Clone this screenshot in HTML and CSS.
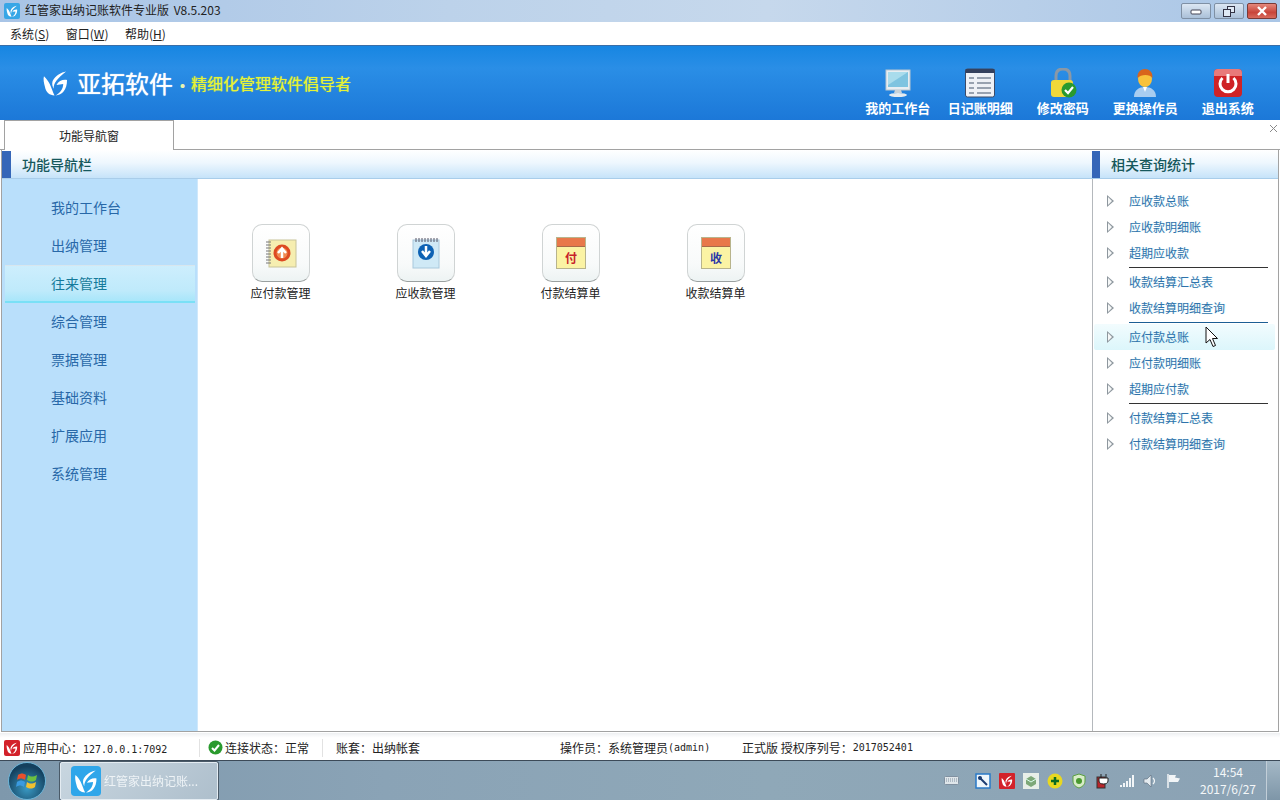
FILE: index.html
```html
<!DOCTYPE html>
<html lang="zh-CN">
<head>
<meta charset="utf-8">
<title>红管家出纳记账软件专业版</title>
<link rel="stylesheet" href="styles.css">
</head>
<body>
<svg class="defs" width="0" height="0" aria-hidden="true">
  <symbol id="logo" viewBox="0 0 26 30">
    <path d="M1 8C3 10 5 12 7 16C9 20 10 24 12 28C7 28 3 25 2 19C1 15 0 11 1 8Z"/>
    <path d="M24 3C19 4 13 7 10 13C9 16 10 19 11 21C11 15 15 10 24 3Z"/>
    <path d="M25 12C21 11 16 13 14 17L21 16C21 21 18 25 13 28C20 28 25 22 25 12Z"/>
  </symbol>
</svg>
<div class="app">
  <header class="titlebar">
    <svg class="title-icon" viewBox="0 0 16 16"><rect width="16" height="16" rx="2" fill="#37a6e6"/><svg x="2" y="1.500" width="12" height="13" class="logo-white"><use href="#logo"/></svg></svg>
    <span class="title-text">红管家出纳记账软件专业版 V8.5.203</span>
    <div class="win-btns">
      <span class="win-btn"><svg width="12" height="8" viewBox="0 0 12 8"><rect x="1" y="3" width="10" height="4" rx="1" fill="#fff" stroke="#445"/></svg></span>
      <span class="win-btn"><svg width="12" height="11" viewBox="0 0 12 11"><rect x="4.500" y="0.500" width="7" height="6" fill="#dfe9f4" stroke="#334"/><rect x="0.500" y="3.500" width="7" height="7" fill="#dfe9f4" stroke="#334"/></svg></span>
      <span class="win-btn win-close"><svg width="12" height="10" viewBox="0 0 12 10"><path d="M2 1L10 9M10 1L2 9" stroke="#fff" stroke-width="2.400"/></svg></span>
    </div>
  </header>

  <nav class="menubar">
    <span class="menu-item">系统(<u>S</u>)</span>
    <span class="menu-item">窗口(<u>W</u>)</span>
    <span class="menu-item">帮助(<u>H</u>)</span>
  </nav>

  <section class="banner">
    <div class="brand">
      <svg class="brand-logo"><use href="#logo"/></svg>
      <span class="brand-name">亚拓软件</span>
      <span class="brand-dot">·</span>
      <span class="brand-slogan">精细化管理软件倡导者</span>
    </div>
    <div class="tools">
      <div class="tool">
        <svg class="tool-icon" viewBox="0 0 30 30"><rect x="3" y="2" width="24" height="20" fill="#e8eef2" stroke="#b8c6d0"/><rect x="5" y="4" width="20" height="15" fill="#7fc4e0"/><path d="M5 4H25L5 17Z" fill="#a9dcec"/><path d="M12 22H18L19 25H11Z" fill="#c8d2d8"/><ellipse cx="15" cy="27" rx="9" ry="2" fill="#e6ecf0"/></svg>
        <span class="tool-label">我的工作台</span>
      </div>
      <div class="tool">
        <svg class="tool-icon" viewBox="0 0 30 30"><rect x="0.500" y="1" width="29" height="28" rx="2" fill="#eef1f6" stroke="#3a4a68"/><rect x="0.500" y="1" width="29" height="4" fill="#34415e"/><path d="M4 10H9M12 10H26M4 15H9M12 15H26M4 20H9M12 20H26M4 25H9M12 25H26" stroke="#98a2b0" stroke-width="2"/></svg>
        <span class="tool-label">日记账明细</span>
      </div>
      <div class="tool">
        <svg class="tool-icon" viewBox="0 0 30 30"><path d="M8 14V8C8 3 11 1 15 1C19 1 22 3 22 8V14" fill="none" stroke="#8a98a6" stroke-width="3"/><rect x="3" y="12" width="22" height="17" rx="3" fill="#f0d83a"/><circle cx="21" cy="22" r="7.500" fill="#2a9a2e"/><path d="M17 22L20 25L25 19" fill="none" stroke="#fff" stroke-width="2.200"/></svg>
        <span class="tool-label">修改密码</span>
      </div>
      <div class="tool">
        <svg class="tool-icon" viewBox="0 0 30 30"><path d="M4 29C4 22 9 19 15 19C21 19 26 22 26 29Z" fill="#a9cdf0"/><path d="M13 19H17L15 24Z" fill="#fff"/><ellipse cx="15" cy="11" rx="7" ry="8" fill="#f8c23c"/><path d="M7.500 10C7 4 11 1 15 1C19 1 23 4 22.500 10C20 6 11 6 7.500 10Z" fill="#d8641c"/></svg>
        <span class="tool-label">更换操作员</span>
      </div>
      <div class="tool">
        <svg class="tool-icon" viewBox="0 0 30 30"><rect x="1" y="1" width="28" height="28" rx="4" fill="#cf2326"/><path d="M1 5A4 4 0 0 1 5 1H25A4 4 0 0 1 29 5V8H1Z" fill="#e87a7a"/><path d="M9.500 10A8 8 0 1 0 20.500 10" fill="none" stroke="#fff" stroke-width="3"/><path d="M15 6V15" stroke="#fff" stroke-width="3"/></svg>
        <span class="tool-label">退出系统</span>
      </div>
    </div>
  </section>

  <div class="tabs">
    <div class="tab">功能导航窗</div>
    <svg class="tab-close" width="9" height="9" viewBox="0 0 9 9"><path d="M1 1L8 8M8 1L1 8" stroke="#8a8a8a"/></svg>
  </div>

  <main class="workspace">
    <div class="nav-area">
      <div class="panel-head"><span class="panel-mark"></span><span class="panel-title">功能导航栏</span></div>
      <div class="nav-body">
        <aside class="sidebar">
          <div class="side-item">我的工作台</div>
          <div class="side-item">出纳管理</div>
          <div class="side-item side-active">往来管理</div>
          <div class="side-item">综合管理</div>
          <div class="side-item">票据管理</div>
          <div class="side-item">基础资料</div>
          <div class="side-item">扩展应用</div>
          <div class="side-item">系统管理</div>
        </aside>
        <section class="content">
          <div class="launch">
            <div class="tile"><svg width="32" height="32" viewBox="0 0 32 32"><rect x="4" y="3" width="27" height="27" fill="#f6eeb0" stroke="#c8c49a"/><path d="M1 5H6M1 8H6M1 11H6M1 14H6M1 17H6M1 20H6M1 23H6M1 26H6" stroke="#777"/><circle cx="17" cy="16" r="8.500" fill="#dd4a22"/><circle cx="17" cy="16" r="5.500" fill="#f08a50"/><path d="M17 21V13M13 16L17 11.500L21 16" fill="none" stroke="#fff" stroke-width="2.500"/></svg></div>
            <span class="tile-label">应付款管理</span>
          </div>
          <div class="launch">
            <div class="tile"><svg width="32" height="32" viewBox="0 0 32 32"><rect x="3" y="3" width="26" height="28" fill="#cfe9f6" stroke="#a8c8dc"/><path d="M6 1V5M9 1V5M12 1V5M15 1V5M18 1V5M21 1V5M24 1V5M27 1V5" stroke="#556"/><circle cx="16" cy="15" r="8" fill="#0d62b4"/><path d="M16 9V18M12 14L16 19L20 14" fill="none" stroke="#fff" stroke-width="2.500"/></svg></div>
            <span class="tile-label">应收款管理</span>
          </div>
          <div class="launch">
            <div class="tile"><div class="ledger"><span class="ledger-top"></span><span class="ledger-char ledger-red">付</span></div></div>
            <span class="tile-label">付款结算单</span>
          </div>
          <div class="launch">
            <div class="tile"><div class="ledger"><span class="ledger-top"></span><span class="ledger-char ledger-blue">收</span></div></div>
            <span class="tile-label">收款结算单</span>
          </div>
        </section>
      </div>
    </div>
    <aside class="related">
      <div class="panel-head"><span class="panel-mark"></span><span class="panel-title">相关查询统计</span></div>
      <ul class="links">
        <li class="link"><i class="arrow"></i>应收款总账</li>
        <li class="link"><i class="arrow"></i>应收款明细账</li>
        <li class="link"><i class="arrow"></i>超期应收款</li>
        <li class="rule"></li>
        <li class="link"><i class="arrow"></i>收款结算汇总表</li>
        <li class="link"><i class="arrow"></i>收款结算明细查询</li>
        <li class="rule rule-blue"></li>
        <li class="link link-hover"><i class="arrow"></i>应付款总账</li>
        <li class="link"><i class="arrow"></i>应付款明细账</li>
        <li class="link"><i class="arrow"></i>超期应付款</li>
        <li class="rule"></li>
        <li class="link"><i class="arrow"></i>付款结算汇总表</li>
        <li class="link"><i class="arrow"></i>付款结算明细查询</li>
      </ul>
    </aside>
  </main>

  <footer class="status">
    <div class="cell cell-a"><svg class="logo-red" width="16" height="16" viewBox="0 0 16 16"><rect width="16" height="16" rx="2" fill="#d3222a"/><svg x="2" y="1.500" width="12" height="13" class="logo-white"><use href="#logo"/></svg></svg><span>应用中心&#xFF1A;<span class="mono">127.0.0.1:7092</span></span></div>
    <div class="cell cell-b"><svg width="15" height="15" viewBox="0 0 15 15"><circle cx="7.500" cy="7.500" r="7" fill="#2a9a2e"/><path d="M4 8L6.500 10.500L11 5" fill="none" stroke="#fff" stroke-width="2"/></svg><span>连接状态&#xFF1A;正常</span></div>
    <div class="cell cell-c">账套&#xFF1A;出纳帐套</div>
    <div class="cell cell-d">操作员&#xFF1A;系统管理员<span class="mono">(admin)</span></div>
    <div class="cell cell-e">正式版 授权序列号&#xFF1A;<span class="mono">2017052401</span></div>
  </footer>

  <div class="taskbar">
    <div class="orb"><svg width="22" height="22" viewBox="0 0 22 22"><path d="M2 5C5 3 7 3 10 5L9 10C6 8 4 8 1 10Z" fill="#e8502c"/><path d="M12 5C15 7 17 7 21 5L20 10C17 12 15 12 11 10Z" fill="#6cc040"/><path d="M1 12C4 10 6 10 9 12L8 17C5 15 3 15 0 17Z" fill="#3a9ae0"/><path d="M11 12C14 14 16 14 20 12L19 17C16 19 14 19 10 17Z" fill="#f0c030"/></svg></div>
    <div class="task-btn">
      <svg class="task-icon" viewBox="0 0 32 32"><rect width="32" height="32" rx="4" fill="#2ea6ea"/><svg x="3" y="2" width="26" height="28" class="logo-white"><use href="#logo"/></svg></svg>
      <span class="task-text">红管家出纳记账...</span>
    </div>
    <div class="tray">
      <svg class="tray-kbd" width="15" height="9" viewBox="0 0 15 9"><rect x="0.500" y="0.500" width="14" height="8" rx="1" fill="#dfe6ea" stroke="#8090a0"/><path d="M2 3H13M2 5H13" stroke="#8090a0" stroke-dasharray="1 1"/></svg>
      <svg width="16" height="16" viewBox="0 0 16 16"><rect x="1" y="1" width="14" height="14" fill="#eef6fc" stroke="#2a7ac8" stroke-width="1.500"/><path d="M4 4L12 12" stroke="#1b3b70" stroke-width="2"/><circle cx="5" cy="5" r="2" fill="#1b3b70"/></svg>
      <svg width="16" height="16" viewBox="0 0 16 16"><rect width="16" height="16" rx="1" fill="#d3222a"/><svg x="2" y="1.500" width="12" height="13" class="logo-white"><use href="#logo"/></svg></svg>
      <svg width="16" height="16" viewBox="0 0 16 16"><rect width="16" height="16" fill="#e8efe8"/><path d="M3 6L8 3L13 6L13 11L8 14L3 11Z" fill="#7da878"/><path d="M3 6L8 9L13 6" fill="none" stroke="#dfe" /></svg>
      <svg width="16" height="16" viewBox="0 0 16 16"><circle cx="8" cy="8" r="7.500" fill="#e8d820"/><path d="M8 4V12M4 8H12" stroke="#0a6a20" stroke-width="2.500"/></svg>
      <svg width="16" height="16" viewBox="0 0 16 16"><path d="M8 1L14 3V8C14 12 11 14 8 15C5 14 2 12 2 8V3Z" fill="#d8ecc8" stroke="#5aa040"/><circle cx="8" cy="8" r="3" fill="#4a9a30"/></svg>
      <svg width="16" height="16" viewBox="0 0 16 16"><rect x="2" y="4" width="8" height="11" fill="#b8242a" stroke="#333"/><path d="M6 1V5M11 1V5M4 5H13V8C13 10 11 11 8.500 11C6 11 4 10 4 8Z" fill="#fff" stroke="#222"/></svg>
      <svg width="16" height="13" viewBox="0 0 16 13"><path d="M1 11H3V13H1ZM4 9H6V13H4ZM7 7H9V13H7ZM10 4H12V13H10ZM13 1H15V13H13Z" fill="#f2f5f7"/></svg>
      <svg width="15" height="14" viewBox="0 0 15 14"><path d="M1 5H4L8 1V13L4 9H1Z" fill="#e4ebf0" stroke="#5a6a78" stroke-width="0.600"/><path d="M10 4C12 6 12 8 10 10" fill="none" stroke="#f2f5f7" stroke-width="1.200"/></svg>
      <svg width="15" height="16" viewBox="0 0 15 16"><path d="M2 1V15" stroke="#f2f5f7" stroke-width="1.500"/><path d="M3 2H10L9 4.500L14 5.500L12 9H3Z" fill="#f2f5f7"/></svg>
    </div>
    <div class="clock"><span>14:54</span><span>2017/6/27</span></div>
    <div class="show-desktop"></div>
  </div>

  <svg class="cursor" width="14" height="22" viewBox="0 0 14 22"><path d="M1 1V17L5 13.500L8 20.500L10.500 19.500L7.500 12.500H12.500Z" fill="#fff" stroke="#111"/></svg>
</div>
</body>
</html>
```
FILE: styles.css
```css
* { box-sizing: border-box; }
html, body { margin: 0; padding: 0; }
body {
  width: 1280px;
  height: 800px;
  overflow: hidden;
  background: #fff;
  color: #111;
  font: 12px "Noto Sans CJK SC", "Liberation Sans", sans-serif;
}
.defs { position: absolute; }
.app { position: relative; display: flex; flex-direction: column; height: 800px; }
.logo-white { fill: #fff; }

.titlebar {
  display: flex;
  align-items: center;
  height: 22px;
  padding-left: 4px;
  background: linear-gradient(90deg, #a8c4e6 0%, #bcd2ea 35%, #c6d8ec 60%, #aac6e6 100%);
  color: #222;
}
.title-icon { width: 16px; height: 16px; }
.title-text { margin-left: 5px; padding-bottom: 2px; line-height: 20px; word-spacing: 2px; }
.win-btns { display: flex; gap: 3px; margin-left: auto; margin-right: 3px; }
.win-btn {
  display: flex;
  align-items: center;
  justify-content: center;
  width: 30px;
  height: 16px;
  border: 1px solid #7f90a4;
  border-radius: 2px;
  background: linear-gradient(#dce7f3, #aac0d8);
}
.win-close { background: linear-gradient(#e4887c, #c8453a 60%, #d86a5c); border-color: #7a3a36; }

.menubar { display: flex; align-items: center; height: 23px; background: #fff; padding-left: 10px; color: #222; }
.menu-item { margin-right: 16.500px; line-height: 22px; }

.banner {
  display: flex;
  align-items: flex-start;
  height: 75px;
  border-top: 1px solid #3a6ea8;
  background: linear-gradient(#1786e2, #2a8ee6 30%, #1c78d8);
}
.brand { display: flex; align-items: center; height: 76px; padding: 0 0 2px 43px; color: #fff; }
.brand-logo { width: 25px; height: 30px; fill: #fff; }
.brand-name { margin-left: 9px; font-size: 24px; line-height: 30px; text-shadow: 0 0 1px #fff; }
.brand-dot { margin-left: 1px; padding-top: 3px; width: 17px; font-size: 16px; font-weight: bold; color: #e8f4b0; text-align: center; }
.brand-slogan { font-size: 16px; color: #e6f238; line-height: 24px; text-shadow: 0 0 1px #d8f030; }
.tools { display: flex; margin-left: auto; padding: 22px 11px 0 0; }
.tool { display: flex; flex-direction: column; align-items: center; width: 82.500px; }
.tool-icon { width: 30px; height: 30px; }
.tool-label { font-size: 13px; font-weight: bold; line-height: 19px; color: #fff; white-space: nowrap; }

.tabs {
  display: flex;
  align-items: flex-start;
  height: 30px;
  padding-left: 4px;
  border-bottom: 1px solid #a2a2a2;
  background: #fff;
}
.tab {
  width: 170px;
  height: 30px;
  border: 1px solid #a2a2a2;
  border-bottom: 0;
  background: #fff;
  text-align: center;
  line-height: 29px;
  color: #222;
}
.tab-close { margin: 4px 2px 0 auto; }

.workspace {
  display: flex;
  height: 582px;
  margin: 0 1px;
  border: 1px solid #a2a2a2;
  border-top: 0;
  background: #fff;
}
.nav-area { display: flex; flex-direction: column; flex: 1; min-width: 0; }
.panel-head {
  display: flex;
  align-items: stretch;
  flex: none;
  height: 29px;
  padding-top: 1px;
  border-bottom: 1px solid #a9cdea;
  background: linear-gradient(#fff, #eef7fe 45%, #c6e3f9);
}
.panel-mark { width: 9px; background: #3566b8; }
.panel-title { margin-left: 11px; font-size: 14px; line-height: 26px; color: #16585c; font-weight: 500; }
.nav-body { display: flex; flex: 1; }
.sidebar { width: 196px; padding-top: 10px; background: #b9dffb; border-right: 1px solid #cfe8fb; }
.side-item { height: 38px; padding-left: 49px; font-size: 14px; line-height: 37px; color: #2868a8; }
.side-active {
  margin: 0 2px 0 3px;
  padding-left: 46px;
  line-height: 35px;
  border-top: 1px solid #d8e6ee;
  border-bottom: 2px solid #7ae0f6;
  background: linear-gradient(#cdeefd, #bfeafb 70%, #a8e6fa);
  color: #157a9a;
}
.content { display: flex; flex: 1; gap: 85px; align-items: flex-start; padding: 45px 0 0 53px; }
.launch { display: flex; flex-direction: column; align-items: center; width: 60px; }
.tile {
  display: flex;
  align-items: center;
  justify-content: center;
  width: 58px;
  height: 58px;
  border: 1px solid #d0d4d4;
  border-bottom-color: #9aa0a0;
  border-radius: 10px;
  background: linear-gradient(#fff, #f8fafa 70%, #edf3f3);
}
.tile-label { margin: 1px 1px 0 0; line-height: 20px; white-space: nowrap; color: #222; }
.ledger {
  display: flex;
  flex-direction: column;
  width: 30px;
  height: 32px;
  border: 1px solid #b8b48c;
  background: #fbf3a4;
}
.ledger-top { height: 9px; background: #e8784a; border-bottom: 1px solid #a86a4a; }
.ledger-char { flex: 1; text-align: center; font-size: 12px; font-weight: bold; line-height: 21px; }
.ledger-red { color: #c8222a; }
.ledger-blue { color: #2838a8; }

.related { display: flex; flex-direction: column; width: 186px; border-left: 1px solid #b4b8bc; }
.related .panel-head { margin-left: -1px; }
.related .panel-mark { width: 8px; }
.related .panel-title { margin-left: 11px; }
.links { margin: 0; padding: 9px 0 0; list-style: none; }
.link {
  position: relative;
  height: 26px;
  padding-left: 36px;
  line-height: 26px;
  color: #2f72aa;
  white-space: nowrap;
  text-shadow: 1px 0 1px rgba(90, 215, 240, .25);
}
.arrow {
  position: absolute;
  left: 14px;
  top: 7px;
  width: 0;
  height: 0;
  border-left: 7px solid #8e979e;
  border-top: 6px solid transparent;
  border-bottom: 6px solid transparent;
}
.arrow::after {
  content: "";
  position: absolute;
  left: -6px;
  top: -4px;
  width: 0;
  height: 0;
  border-left: 4px solid #f6f8f8;
  border-top: 4px solid transparent;
  border-bottom: 4px solid transparent;
}
.link-hover {
  margin: 0 3px 0 1px;
  padding-left: 35px;
  background: linear-gradient(#f2fcfe, #dcf6fb);
  border-radius: 2px;
}
.link-hover .arrow { left: 13px; }
.rule { height: 2px; margin: 1px 10px 0 36px; border-top: 1px solid #333; }
.rule-blue { border-top-color: #1c5f94; }

.status {
  display: flex;
  align-items: center;
  height: 27px;
  margin-top: 1px;
  padding-top: 2px;
  background: linear-gradient(#eef0f2, #fff 18%, #fff);
  color: #222;
}
.mono { font-family: "DejaVu Sans Mono", "Liberation Mono", monospace; font-size: 10px; }
.cell { display: flex; align-items: center; height: 18px; flex: none; white-space: pre; }
.cell-a { width: 200px; padding-left: 4px; gap: 3px; border-right: 1px solid #e2e2e2; }
.cell-b { width: 123px; padding-left: 8px; gap: 2px; border-right: 1px solid #e2e2e2; }
.cell-c { width: 224px; padding-left: 13px; }
.cell-d { width: 182px; padding-left: 13px; }
.cell-e { padding-left: 13px; }

.taskbar {
  display: flex;
  align-items: center;
  flex: 1;
  border-top: 1px solid #3c4a58;
  background: linear-gradient(90deg, #7e98ac 0%, #8aa3b6 30%, #8fa8b8 60%, #8ba2b4 100%);
}
.orb {
  display: flex;
  align-items: center;
  justify-content: center;
  width: 38px;
  height: 38px;
  margin-left: 8px;
  border: 1px solid #6ab4d8;
  border-radius: 50%;
  background: radial-gradient(circle at 50% 70%, #3a9ac4, #14405e 70%);
}
.task-btn {
  display: flex;
  align-items: center;
  width: 158px;
  height: 38px;
  margin-left: 14px;
  padding-left: 10px;
  border: 1px solid #e4ecf2;
  border-radius: 2px;
  background: linear-gradient(135deg, #c8d6e0, #aebfcc);
  box-shadow: 0 0 0 1px #4a5a68;
}
.task-icon { width: 30px; height: 30px; flex: none; }
.task-text { margin-left: 3px; color: #eef3f6; white-space: nowrap; overflow: hidden; filter: blur(.6px); }
.tray { display: flex; align-items: center; gap: 8px; margin-left: auto; }
.tray-kbd { margin-right: 8px; }
.clock {
  display: flex;
  flex-direction: column;
  align-items: center;
  width: 76px;
  margin-left: 9px;
  padding-bottom: 2px;
  color: #f4f7f9;
  line-height: 17px;
}
.show-desktop {
  width: 14px;
  height: 100%;
  border-left: 1px solid #c2ced8;
  background: linear-gradient(#a4b8c6, #7e96a8);
}
.cursor { position: absolute; left: 1205px; top: 326px; }
```
